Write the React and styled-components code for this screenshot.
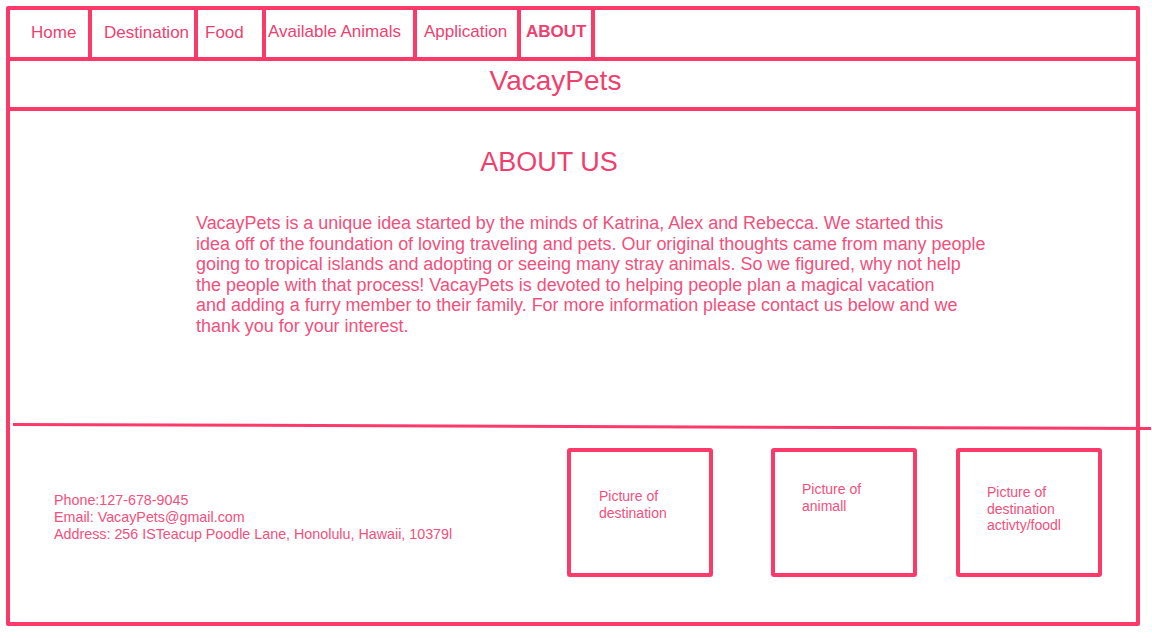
import React from "react";
import styled, { createGlobalStyle } from "styled-components";

const LINE = "#fb3a6a";
const INK = "#ef3f6f";
const SOFT = "#f2507c";

const Global = createGlobalStyle`
  html, body { margin: 0; padding: 0; background: #ffffff; }
  body { font-family: "Liberation Sans", Arial, sans-serif; width: 1152px; height: 638px; overflow: hidden; }
`;

const Frame = styled.div`
  box-sizing: border-box;
  margin: 6px 0 0 6px;
  width: 1134px;
  height: 620px;
  border: 4px solid ${LINE};
  border-radius: 2px;
  display: flex;
  flex-direction: column;
`;

const Nav = styled.nav`
  display: flex;
  height: 47px;
  flex: none;
  border-bottom: 4px solid ${LINE};
`;

const NavItem = styled.a`
  box-sizing: border-box;
  width: ${(p) => p.$w}px;
  padding-left: ${(p) => p.$pl}px;
  padding-bottom: ${(p) => p.$pb || 2}px;
  border-right: 4px solid ${LINE};
  display: flex;
  align-items: center;
  color: ${INK};
  font-size: 17px;
  font-weight: ${(p) => (p.$active ? 700 : 400)};
  text-decoration: none;
  white-space: nowrap;
`;

const TitleBar = styled.header`
  box-sizing: border-box;
  height: 50px;
  flex: none;
  border-bottom: 4px solid ${LINE};
  margin-right: -3px;
  display: flex;
  align-items: center;
  justify-content: center;
  padding-right: 38px;
  padding-bottom: 7px;
  color: ${INK};
  font-size: 28px;
`;

const Main = styled.main`
  flex: 1;
  display: flex;
  flex-direction: column;
  align-items: center;
  padding-top: 36px;
`;

const Heading = styled.h1`
  margin: 0;
  font-weight: 400;
  font-size: 27px;
  line-height: 31px;
  color: ${INK};
  transform: translateX(-24px);
`;

const Paragraph = styled.p`
  margin: 35px 0 0 186px;
  align-self: flex-start;
  font-size: 17.95px;
  line-height: 20.6px;
  color: ${SOFT};
`;

const Divider = styled.hr`
  margin: 0 -15px 0 3px;
  border: none;
  height: 3px;
  background: ${LINE};
  transform: rotate(0.2deg);
  flex: none;
`;

const Footer = styled.footer`
  height: 194px;
  flex: none;
  display: flex;
  align-items: flex-start;
  padding-top: 20px;
  box-sizing: border-box;
`;

const Contact = styled.div`
  flex: 1;
  padding: 44px 0 0 44px;
  font-size: 14.3px;
  line-height: 17px;
  color: ${SOFT};
`;

const Boxes = styled.div`
  display: flex;
  margin-right: 34px;
`;

const PicBox = styled.div`
  box-sizing: border-box;
  width: 146px;
  height: 129px;
  margin-left: ${(p) => p.$ml}px;
  border: 4px solid ${LINE};
  border-radius: 3px;
  padding: ${(p) => p.$pt}px 0 0 ${(p) => p.$pl}px;
  font-size: 14px;
  line-height: 16.5px;
  color: ${SOFT};
`;

const navItems = [
  { label: "Home", w: 82, pl: 21 },
  { label: "Destination", w: 106, pl: 12 },
  { label: "Food", w: 68, pl: 7, pb: 0 },
  { label: "Available Animals", w: 151, pl: 2, pb: 4 },
  { label: "Application", w: 104, pl: 7, pb: 3 },
  { label: "ABOUT", w: 74, pl: 5, active: true, pb: 4 },
];

const lines = [
  "VacayPets is a unique idea started by the minds of Katrina, Alex and Rebecca. We started this",
  "idea off of the foundation of loving traveling and pets. Our original thoughts came from many people",
  "going to tropical islands and adopting or seeing many stray animals. So we figured, why not help",
  "the people with that process! VacayPets is devoted to helping people plan a magical vacation",
  "and adding a furry member to their family. For more information please contact us below and we",
  "thank you for your interest.",
];

export default function App() {
  return (
    <>
      <Global />
      <Frame>
        <Nav>
          {navItems.map((n) => (
            <NavItem key={n.label} $w={n.w} $pl={n.pl} $pb={n.pb} $active={n.active}>
              {n.label}
            </NavItem>
          ))}
        </Nav>
        <TitleBar>VacayPets</TitleBar>
        <Main>
          <Heading>ABOUT US</Heading>
          <Paragraph>
            {lines.map((l, i) => (
              <React.Fragment key={i}>
                {l}
                {i < lines.length - 1 && <br />}
              </React.Fragment>
            ))}
          </Paragraph>
        </Main>
        <Divider />
        <Footer>
          <Contact>
            Phone:127-678-9045
            <br />
            Email: VacayPets@gmail.com
            <br />
            Address: 256 ISTeacup Poodle Lane, Honolulu, Hawaii, 10379l
          </Contact>
          <Boxes>
            <PicBox $ml={0} $pt={36} $pl={28}>
              Picture of
              <br />
              destination
            </PicBox>
            <PicBox $ml={58} $pt={29} $pl={27}>
              Picture of
              <br />
              animall
            </PicBox>
            <PicBox $ml={39} $pt={32} $pl={27}>
              Picture of
              <br />
              destination
              <br />
              activty/foodl
            </PicBox>
          </Boxes>
        </Footer>
      </Frame>
    </>
  );
}
